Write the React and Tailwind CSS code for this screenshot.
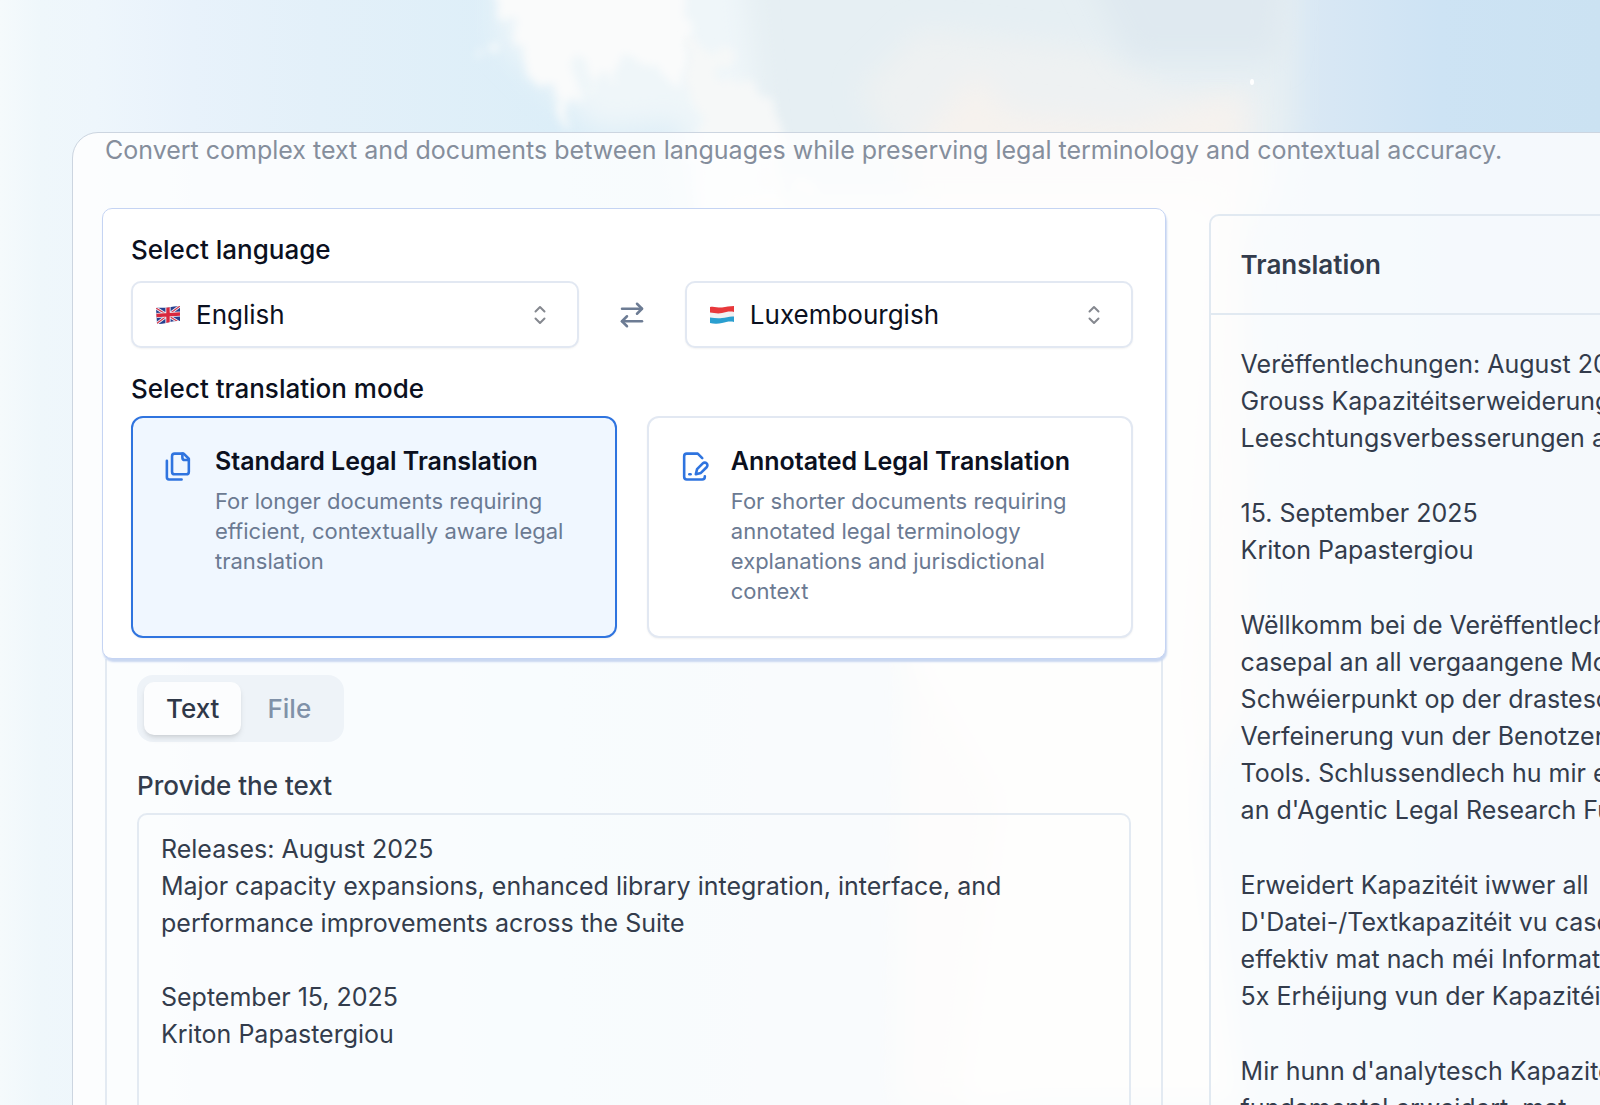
import React, { useState } from 'react';
import { ArrowRightLeft } from 'lucide-react';

const SOURCE_TEXT = `Releases: August 2025
Major capacity expansions, enhanced library integration, interface, and performance improvements across the Suite

September 15, 2025
Kriton Papastergiou
`;

const TRANSLATION = [
    ['Verëffentlechungen: August 2025', 'Grouss Kapazitéitserweiderungen', 'Leeschtungsverbesserungen an'],
    ['15. September 2025', 'Kriton Papastergiou'],
    [
        'Wëllkomm bei de Verëffentlechungen',
        'casepal an all vergaangene Mount',
        'Schwéierpunkt op der drastesch',
        'Verfeinerung vun der Benotzer',
        'Tools. Schlussendlech hu mir eng',
        "an d'Agentic Legal Research Funktioun",
    ],
    [
        'Erweidert Kapazitéit iwwer all',
        "D'Datei-/Textkapazitéit vu casepal",
        'effektiv mat nach méi Informatioun',
        '5x Erhéijung vun der Kapazitéit',
    ],
    ["Mir hunn d'analytesch Kapazitéit", 'fundamental erweidert, mat'],
];

function SkyBackground() {
    return (
        <svg className="absolute inset-0 h-full w-full" viewBox="0 0 1600 1105" preserveAspectRatio="xMidYMin slice" aria-hidden="true">
            <defs>
                <linearGradient id="sky" x1="0" x2="1" y1="0" y2="0">
                    <stop offset="0" stopColor="#f5fafc" />
                    <stop offset="0.025" stopColor="#eff7fb" />
                    <stop offset="0.06" stopColor="#eef6fc" />
                    <stop offset="0.12" stopColor="#e8f2fb" />
                    <stop offset="0.2" stopColor="#e3f0f9" />
                    <stop offset="0.35" stopColor="#dceef8" />
                    <stop offset="0.6" stopColor="#e2ecf2" />
                    <stop offset="0.8" stopColor="#dce9f4" />
                    <stop offset="0.9" stopColor="#cde3f4" />
                    <stop offset="1" stopColor="#cbe2f2" />
                </linearGradient>
                <filter id="wisp" x="-30%" y="-30%" width="160%" height="160%">
                    <feTurbulence type="fractalNoise" baseFrequency="0.03 0.02" numOctaves="5" seed="11" />
                    <feDisplacementMap in="SourceGraphic" scale="80" xChannelSelector="R" yChannelSelector="G" />
                    <feGaussianBlur stdDeviation="4" />
                </filter>
                <filter id="haze" x="-30%" y="-30%" width="160%" height="160%">
                    <feGaussianBlur stdDeviation="14" />
                </filter>
            </defs>
            <rect width="1600" height="1105" fill="url(#sky)" />
            <path d="M690 -40H1295V130L1260 230H740L720 120Z" fill="#e6eff3" filter="url(#haze)" />
            <path d="M500 -60H740L750 40L770 240L700 240L680 120L600 130L540 80L500 40Z" fill="#eff6f9" filter="url(#haze)" />
            <path d="M490 -80H680L690 30L670 80L620 65L580 80L562 115L545 85L520 60L495 30Z" fill="#fafbfb" filter="url(#wisp)" />
            <path d="M680 40L735 50L770 100L800 240L700 240L690 130Z" fill="#f6f8f8" filter="url(#wisp)" />
            <path d="M860 90L920 30L1090 50L1180 90L1260 90L1260 200H920Z" fill="#eef1f2" filter="url(#haze)" />
            <path d="M975 75L1010 115L1130 125L1240 95L1250 700L1000 1105H900L920 140Z" fill="#f6f2ee" filter="url(#haze)" />
            <path d="M1080 -40L1110 20L1130 60L1280 60L1290 -40Z" fill="#dfe9f0" filter="url(#haze)" />
            <path d="M720 200L1220 200L1190 700L1240 1105H960L1000 800L820 500Z" fill="#faf9f7" filter="url(#haze)" />
            <ellipse cx="1252" cy="82" rx="2" ry="3" fill="#ffffff" />
        </svg>
    );
}

function FlagUK() {
    return (
        <svg viewBox="0 0 24 18" className="h-[18px] w-6" aria-hidden="true">
            <defs>
                <clipPath id="uk">
                    <path d="M0 2C4 1 8 2.500 12 1.500S20 0 24 0V15C20 15 16 15 12 16.500S4 18 1 18Z" />
                </clipPath>
            </defs>
            <g clipPath="url(#uk)">
                <rect width="24" height="18" fill="#27408f" />
                <path d="M0 2L24 17M0 18L24 0" stroke="#f3f3f8" strokeWidth="3" />
                <path d="M0 2L24 17M0 18L24 0" stroke="#d33a50" strokeWidth="1.2" />
                <path d="M12 0V18M0 9.5L24 8" stroke="#f3f3f8" strokeWidth="5.2" />
                <path d="M12 0V18M0 9.5L24 8" stroke="#d8283f" strokeWidth="3.4" />
            </g>
        </svg>
    );
}

function FlagLuxembourg() {
    return (
        <svg viewBox="0 0 24 18" className="h-[18px] w-6" aria-hidden="true">
            <path d="M0 1C4 0 8 2 12 1.500S20 0 24 0V16C20 15 16 16 12 17S4 18 0 17Z" fill="#f1f1f3" />
            <path d="M0 1C4 0 8 2 12 1.500S20 0 24 0V6C20 5 16 6 12 7S4 7 0 6.500Z" fill="#e8383b" />
            <path d="M0 11.500C4 12 8 12.500 12 12S20 10 24 10.500V16C20 15 16 16 12 17S4 18 0 17Z" fill="#2a9fd0" />
        </svg>
    );
}

function SortIcon() {
    return (
        <svg viewBox="0 0 12 20" className="h-5 w-3" fill="none" stroke="#85888f" strokeWidth="2" strokeLinecap="round" strokeLinejoin="round" aria-hidden="true">
            <path d="M1.500 6.500L6 2L10.500 6.500M1.500 13.500L6 18L10.500 13.500" />
        </svg>
    );
}

function FilesIcon() {
    return (
        <svg viewBox="0 0 24 24" className="h-[31px] w-[31px] shrink-0" fill="none" stroke="#2f74df" strokeWidth="2" strokeLinecap="round" strokeLinejoin="round" aria-hidden="true">
            <path d="M20 7h-3a2 2 0 0 1-2-2V2" />
            <path d="M9 18a2 2 0 0 1-2-2V4a2 2 0 0 1 2-2h7l4 4v10a2 2 0 0 1-2 2Z" />
            <path d="M3 7.600v12.800A1.600 1.600 0 0 0 4.600 22h9.800" />
        </svg>
    );
}

function SignatureIcon() {
    return (
        <svg viewBox="0 0 24 24" className="h-[31px] w-[31px] shrink-0" fill="none" stroke="#2f74df" strokeWidth="2" strokeLinecap="round" strokeLinejoin="round" aria-hidden="true">
            <path d="M20 19.500v.5a2 2 0 0 1-2 2H6a2 2 0 0 1-2-2V4a2 2 0 0 1 2-2h8.500L18 5.500" />
            <path d="M8 18h1" />
            <path d="M18.420 9.610a2.100 2.100 0 1 1 2.970 2.970L16.950 17 13 18l.99-3.950 4.430-4.440Z" />
        </svg>
    );
}

function LanguageSelect({ label, flag, value, onChange }) {
    return (
        <div className="relative flex-1">
            <select
                aria-label={label}
                value={value}
                onChange={(e) => onChange(e.target.value)}
                className="h-[67px] w-full appearance-none rounded-[10px] border-2 border-[#e2e8f2] bg-white pl-[63px] pr-14 text-[26px] text-[#0b1020] shadow-xs"
            >
                <option>English</option>
                <option>Luxembourgish</option>
            </select>
            <span className="pointer-events-none absolute inset-y-0 left-[25px] flex items-center">{flag}</span>
            <span className="pointer-events-none absolute inset-y-0 right-[33px] flex items-center">
                <SortIcon />
            </span>
        </div>
    );
}

function ModeCard({ id, icon, title, description, checked, onSelect }) {
    return (
        <label
            htmlFor={id}
            className={
                checked
                    ? 'flex h-[222px] cursor-pointer gap-[21px] rounded-xl border-2 border-[#2f74df] bg-[#f0f7ff] px-[30px] pt-[25px] shadow-xs'
                    : 'flex h-[222px] cursor-pointer gap-[21px] rounded-xl border-2 border-[#e2e8f2] bg-white px-[30px] pt-[25px] shadow-xs'
            }
        >
            <input id={id} type="radio" name="mode" checked={checked} onChange={onSelect} className="sr-only" />
            <span className="pt-2">{icon}</span>
            <span className="block">
                <span className="block text-[25px] font-semibold leading-[37px] text-[#0b1020]">{title}</span>
                <span className="block pt-[6px] text-[22px] leading-[30px] text-[#6b7a92]">{description}</span>
            </span>
        </label>
    );
}

export default function App() {
    const [from, setFrom] = useState('English');
    const [to, setTo] = useState('Luxembourgish');
    const [mode, setMode] = useState('standard');
    const [tab, setTab] = useState('text');
    const [text, setText] = useState(SOURCE_TEXT);

    const flagFor = (language) => (language === 'English' ? <FlagUK /> : <FlagLuxembourg />);

    const swap = () => {
        setFrom(to);
        setTo(from);
    };

    const tabClass = (name) =>
        tab === name
            ? 'h-[53px] rounded-[10px] bg-[#fcfdfe] px-[22px] font-medium text-[#2f3848] shadow-md'
            : 'h-[53px] rounded-[10px] px-[26px] font-medium text-[#8091a8]';

    return (
        <div className="relative h-screen overflow-hidden font-['Inter',sans-serif] text-[26px] leading-[37px] text-[#333c4c]">
            <SkyBackground />
            <main className="relative mt-[132px] -mr-7 ml-[72px] h-full overflow-hidden rounded-tl-[26px] border border-[#ccd5e0] bg-white/80 pl-8">
                <p className="whitespace-nowrap text-[25px] leading-[35px] text-[#858e9c]">
                    Convert complex text and documents between languages while preserving legal terminology and contextual accuracy.
                </p>

                <div className="mt-10 grid w-[142%] grid-cols-2 items-start gap-[46px]">
                    <div>
                        <section className="relative -mx-[3px] rounded-[10px] border border-[#c5d4f3] bg-white pt-[22px] pr-8 pb-5 pl-7 shadow-[1px_3px_2px_#c9d7f1]">
                            <h2 className="font-medium text-[#0b1020]">Select language</h2>
                            <div className="mt-[13px] flex items-center">
                                <LanguageSelect label="Source language" flag={flagFor(from)} value={from} onChange={setFrom} />
                                <button type="button" onClick={swap} aria-label="Swap languages" className="mx-[38px]">
                                    <ArrowRightLeft className="h-[30px] w-[30px] text-[#6d7c94]" />
                                </button>
                                <LanguageSelect label="Target language" flag={flagFor(to)} value={to} onChange={setTo} />
                            </div>

                            <h2 className="mt-[22px] font-medium text-[#0b1020]">Select translation mode</h2>
                            <div className="mt-[9px] grid grid-cols-2 gap-[30px]">
                                <ModeCard
                                    id="mode-standard"
                                    icon={<FilesIcon />}
                                    title="Standard Legal Translation"
                                    description="For longer documents requiring efficient, contextually aware legal translation"
                                    checked={mode === 'standard'}
                                    onSelect={() => setMode('standard')}
                                />
                                <ModeCard
                                    id="mode-annotated"
                                    icon={<SignatureIcon />}
                                    title="Annotated Legal Translation"
                                    description="For shorter documents requiring annotated legal terminology explanations and jurisdictional context"
                                    checked={mode === 'annotated'}
                                    onSelect={() => setMode('annotated')}
                                />
                            </div>
                        </section>

                        <section className="border-x-2 border-[#e3eaf2] px-[30px] pt-4">
                            <div className="inline-flex rounded-2xl bg-[#eef3f8] p-[7px]">
                                <button type="button" onClick={() => setTab('text')} className={tabClass('text')}>Text</button>
                                <button type="button" onClick={() => setTab('file')} className={tabClass('file')}>File</button>
                            </div>

                            <label htmlFor="source" className="mt-[25px] block font-medium">Provide the text</label>
                            <textarea
                                id="source"
                                value={text}
                                onChange={(e) => setText(e.target.value)}
                                rows={12}
                                spellCheck={false}
                                className="mt-[9px] block w-full resize-none overflow-hidden rounded-[10px] border-2 border-[#e3eaf2] bg-transparent px-[22px] py-4 text-[25px]"
                            />
                        </section>
                    </div>

                    <section className="mt-[6px] rounded-[10px] border-2 border-[#e1e9f1]">
                        <h2 className="border-b-2 border-[#e1e9f1] px-[30px] py-[30px] font-semibold">Translation</h2>
                        <div className="space-y-[38px] px-[30px] py-[31px] text-[25px]">
                            {TRANSLATION.map((lines) => (
                                <p key={lines[0]}>
                                    {lines.map((line) => (
                                        <span key={line} className="block whitespace-nowrap">{line}</span>
                                    ))}
                                </p>
                            ))}
                        </div>
                    </section>
                </div>
            </main>
        </div>
    );
}
